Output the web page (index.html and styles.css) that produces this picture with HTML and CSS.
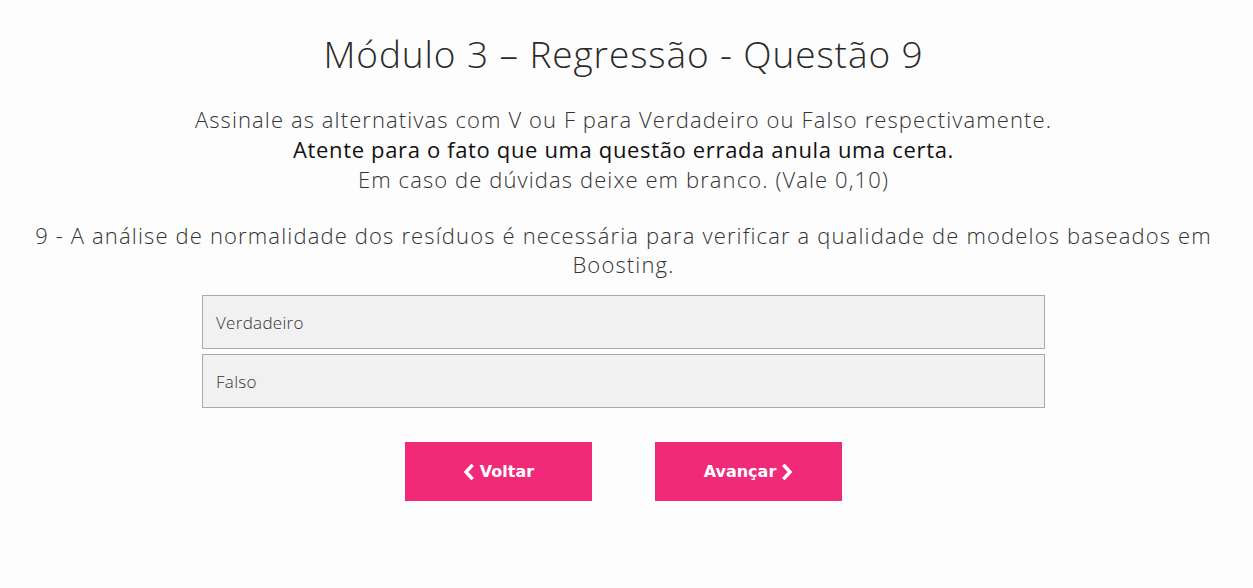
FILE: index.html
```html
<!DOCTYPE html>
<html lang="pt-BR">
<head>
<meta charset="utf-8">
<title>Módulo 3 – Regressão - Questão 9</title>
<link rel="stylesheet" href="styles.css">
</head>
<body>
<main class="page">
  <h1 class="title">Módulo 3 – Regressão - Questão 9</h1>
  <div class="intro">
    <p>Assinale as alternativas com V ou F para Verdadeiro ou Falso respectivamente.</p>
    <p class="strong">Atente para o fato que uma questão errada anula uma certa.</p>
    <p>Em caso de dúvidas deixe em branco. (Vale 0,10)</p>
  </div>
  <p class="question">9 - A análise de normalidade dos resíduos é necessária para verificar a qualidade de modelos baseados em Boosting.</p>
  <div class="options">
    <label class="option">Verdadeiro</label>
    <label class="option">Falso</label>
  </div>
  <div class="nav">
    <button class="btn"><svg class="chev" viewBox="0 0 11 16" width="11" height="16"><path d="M8.5 2 L3 8 L8.5 14" fill="none" stroke="#fff" stroke-width="3.4" stroke-linecap="square" stroke-linejoin="miter"/></svg>Voltar</button>
    <button class="btn">Avançar<svg class="chev" viewBox="0 0 11 16" width="11" height="16"><path d="M2.5 2 L8 8 L2.5 14" fill="none" stroke="#fff" stroke-width="3.4" stroke-linecap="square" stroke-linejoin="miter"/></svg></button>
  </div>
</main>
</body>
</html>
```
FILE: styles.css
```css
html, body {
  margin: 0;
  padding: 0;
  background: #fdfdfd;
}
body {
  font-family: "Open Sans", "Lato", sans-serif;
  color: #333;
}
.page {
  padding: 0 6px 0 0;
  text-align: center;
}
.title {
  margin: 0;
  padding-top: 30px;
  font-size: 37px;
  font-weight: 300;
  line-height: 48px;
  letter-spacing: 0.9px;
  color: #2a2a2a;
}
.intro {
  margin-top: 26px;
  font-size: 22px;
  font-weight: 300;
  line-height: 30px;
  letter-spacing: 1.1px;
}
.intro p {
  margin: 0;
}
.intro .strong {
  font-weight: 400;
  color: #111;
  letter-spacing: 0.65px;
}
.question {
  margin: 27px 30px 0 30px;
  font-size: 22px;
  font-weight: 300;
  line-height: 29px;
  letter-spacing: 1.15px;
}
.options {
  width: 843px;
  margin: 16px auto 0;
  display: flex;
  flex-direction: column;
  gap: 5px;
  text-align: left;
}
.option {
  display: flex;
  align-items: center;
  height: 52px;
  padding: 0 13px;
  background: #f1f1f1;
  border: 1px solid #aaa;
  font-size: 17px;
  font-weight: 300;
  letter-spacing: 0.3px;
  color: #333;
}
.nav {
  display: flex;
  justify-content: center;
  gap: 63px;
  margin-top: 34px;
}
.btn {
  width: 187px;
  height: 59px;
  border: 0;
  background: #f02a78;
  color: #fff;
  font-family: "DejaVu Sans", Verdana, sans-serif;
  font-weight: bold;
  font-size: 16px;
  display: flex;
  align-items: center;
  justify-content: center;
  gap: 6px;
  padding: 0;
}
.chev {
  display: block;
}
```
